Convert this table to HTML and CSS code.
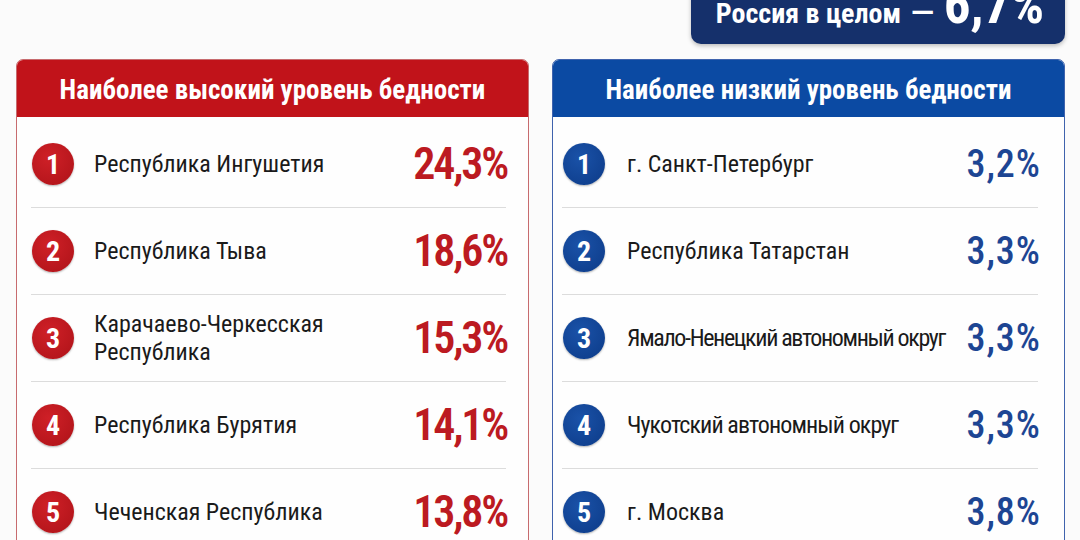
FILE: index.html
```html
<!DOCTYPE html>
<html lang="ru">
<head>
<meta charset="utf-8">
<link rel="stylesheet" href="styles.css">
</head>
<body>
<div class="page">
  <div class="top">
    <div class="banner"><span class="banner-label">Россия в целом</span><span class="banner-dash">—</span><span class="banner-value">6,7%</span></div>
  </div>
  <div class="cards">
    <section class="card card-red">
      <h2 class="card-head">Наиболее высокий уровень бедности</h2>
      <div class="card-body">
        <div class="row"><span class="num">1</span><span class="name">Республика Ингушетия</span><span class="pct">24,3%</span></div>
        <div class="row"><span class="num">2</span><span class="name">Республика Тыва</span><span class="pct">18,6%</span></div>
        <div class="row"><span class="num">3</span><span class="name">Карачаево-Черкесская<br>Республика</span><span class="pct">15,3%</span></div>
        <div class="row"><span class="num">4</span><span class="name">Республика Бурятия</span><span class="pct">14,1%</span></div>
        <div class="row"><span class="num">5</span><span class="name">Чеченская Республика</span><span class="pct">13,8%</span></div>
      </div>
    </section>
    <section class="card card-blue">
      <h2 class="card-head">Наиболее низкий уровень бедности</h2>
      <div class="card-body">
        <div class="row"><span class="num">1</span><span class="name">г. Санкт-Петербург</span><span class="pct">3,2%</span></div>
        <div class="row"><span class="num">2</span><span class="name">Республика Татарстан</span><span class="pct">3,3%</span></div>
        <div class="row"><span class="num">3</span><span class="name name-tighter">Ямало-Ненецкий автономный округ</span><span class="pct">3,3%</span></div>
        <div class="row"><span class="num">4</span><span class="name name-tight">Чукотский автономный округ</span><span class="pct">3,3%</span></div>
        <div class="row"><span class="num">5</span><span class="name">г. Москва</span><span class="pct">3,8%</span></div>
      </div>
    </section>
  </div>
</div>
</body>
</html>
```

FILE: styles.css
```css
* { box-sizing: border-box; }
html, body { margin: 0; padding: 0; }
body {
  background: #fbfbfb;
  font-family: "Roboto", "Liberation Sans", sans-serif;
  font-stretch: 75%;
  width: 1080px;
  height: 540px;
  overflow: hidden;
}
.page {
  padding: 0 15px 0 16px;
}
.top {
  display: flex;
  justify-content: flex-end;
}
.banner {
  margin-top: -30px;
  height: 74px;
  width: 374px;
  background: #15306b;
  border-radius: 0 0 10px 10px;
  box-shadow: 0 2px 4px rgba(0,0,0,0.25);
  color: #fff;
  display: flex;
  align-items: baseline;
  justify-content: center;
  padding: 4px 0 0 4px;
  font-weight: bold;
}
.banner-label { font-size: 28px; }
.banner-dash {
  font-size: 30px;
  font-stretch: 100%;
  margin: 0 10px 0 10px;
}
.banner-value { font-size: 53px; }
.cards {
  margin-top: 15px;
  display: grid;
  grid-template-columns: 513px 513px;
  gap: 23px;
}
.card {
  border-radius: 7px;
  background: #fefefe;
  overflow: hidden;
  height: 520px;
}
.card-red { border: 1.5px solid #c76b6e; }
.card-blue { border: 1.5px solid #3f63ad; }
.card-head {
  margin: 0;
  height: 57px;
  display: flex;
  align-items: center;
  justify-content: center;
  color: #fff;
  font-size: 27px;
  font-weight: bold;
  padding-top: 2px;
}
.card-red .card-head { background: #c1131a; }
.card-blue .card-head { background: #0b4aa3; }
.card-body {
  padding: 4px 22px 0 14px;
}
.card-blue .card-body { padding: 4px 26px 0 9px; }
.row {
  height: 87px;
  display: flex;
  align-items: center;
  border-top: 1.5px solid #dcdcdc;
}
.row:first-child { border-top: none; height: 86px; }
.num {
  flex: none;
  width: 42px;
  height: 42px;
  border-radius: 50%;
  display: flex;
  align-items: center;
  justify-content: center;
  color: #fff;
  font-weight: bold;
  font-size: 28px;
  margin-left: 1px;
  box-shadow: 0 1px 2px rgba(0,0,0,0.3);
}
.card-red .num { background: radial-gradient(circle at 40% 35%, #cf2027, #ad1218); }
.card-blue .num { background: radial-gradient(circle at 40% 35%, #1a52a8, #0c3a87); }
.name {
  flex: 1;
  margin-left: 20px;
  font-size: 24px;
  line-height: 28px;
  color: #1a1a1a;
}
.card-blue .name { margin-left: 22px; }
.name-tight { letter-spacing: -0.9px; }
.name-tighter { letter-spacing: -1.35px; }
.pct {
  flex: none;
}
.card-red .pct {
  color: #bc1a21;
  font-size: 44px;
  font-weight: 600;
  letter-spacing: -2.2px;
  margin-right: -1px;
}
.card-blue .pct {
  color: #1d4593;
  font-size: 38px;
  font-weight: 500;
  letter-spacing: 1px;
  margin-right: -3px;
}
```
